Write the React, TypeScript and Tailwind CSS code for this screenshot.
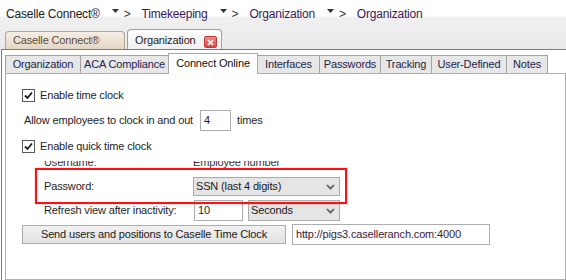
import React from "react"

type Tab = { label: string, w: string, active?: boolean }

const tabs: Tab[] = [
  { label: "Organization", w: "w-[76px]" },
  { label: "ACA Compliance", w: "w-[89px]" },
  { label: "Connect Online", w: "w-[90px]", active: true },
  { label: "Interfaces", w: "w-[63px]" },
  { label: "Passwords", w: "w-[62px]" },
  { label: "Tracking", w: "w-[52px]" },
  { label: "User-Defined", w: "w-[76px]" },
  { label: "Notes", w: "w-[42px]" },
]

function Caret() {
  return (
    <svg width="7" height="4" viewBox="0 0 7 4" className="ml-[12px] mt-[2px]">
      <path d="M0 0 H7 L3.5 4 Z" fill="#333" />
    </svg>
  )
}

function Crumb({ text, link, last }: { text: string, link?: boolean, last?: boolean }) {
  return (
    <>
      <span className={link ? "text-[#37185a]" : "text-[#1a1a1a]"}>{text}</span>
      {!last && <>
        <Caret />
        <span className="ml-[5px] mr-[11px] text-[#333]">&gt;</span>
      </>}
    </>
  )
}

function Checkbox() {
  return (
    <div className="w-[13px] h-[13px] border border-[#5a5a5a] bg-white flex items-center justify-center">
      <svg width="9" height="9" viewBox="0 0 9 9">
        <path d="M1 4.5 L3.5 7 L8 1.5" stroke="#1a1a1a" strokeWidth="1.8" fill="none" />
      </svg>
    </div>
  )
}

function Chevron() {
  return (
    <svg width="9" height="6" viewBox="0 0 9 6" className="ml-auto mr-[4px]">
      <path d="M1 1 L4.5 4.5 L8 1" stroke="#555" strokeWidth="1.6" fill="none" />
    </svg>
  )
}

function Select({ value, className }: { value: string, className: string }) {
  return (
    <div className={`${className} border border-[#acacac] bg-[#e5e5e5] flex items-center pl-[2px] text-[#1a1a1a]`}>
      <span>{value}</span>
      <Chevron />
    </div>
  )
}

export default function App() {
  return (
    <div className="w-[566px] h-[280px] bg-white overflow-hidden relative flex flex-col font-['Liberation_Sans',Arial,sans-serif] text-[11px] leading-[13px] tracking-[-0.15px]">
      {/* header: breadcrumb + document tabs */}
      <div className="h-[49px] bg-[linear-gradient(to_bottom,#ffffff_0,#ffffff_16px,#f0f0f0_17px,#e9e9e9_49px)] flex flex-col">
        <div className="h-[29px] pt-[7px] pl-[6px] flex items-start text-[12px] leading-[14px] tracking-[-0.2px]">
          <Crumb text="Caselle Connect®" />
          <Crumb text="Timekeeping" link />
          <Crumb text="Organization" link />
          <Crumb text="Organization" link last />
        </div>
        <div className="h-[20px] flex items-end pl-[5px] gap-[2px]">
          <div className="w-[120px] h-[18px] rounded-t-[4px] border border-b-0 border-[#b4a58f] bg-[linear-gradient(to_bottom,#f4eee5,#e3d7c4)] pl-[7px] pt-[2px] text-[#5c4c3e]">
            Caselle Connect®
          </div>
          <div className="w-[95px] h-[20px] rounded-t-[4px] border border-b-0 border-[#a29d97] bg-[linear-gradient(to_bottom,#fdfdfd,#f1f1f1)] pl-[7px] pt-[4px] flex items-start text-[#1a1a1a]">
            <span>Organization</span>
            <div className="ml-auto mr-[4px] mt-[2px] w-[13px] h-[12px] rounded-[2px] border border-[#c23a3a] bg-[linear-gradient(to_bottom,#f08a8a,#d84848)] flex items-center justify-center">
              <svg width="7" height="7" viewBox="0 0 7 7">
                <path d="M1 1 L6 6 M6 1 L1 6" stroke="white" strokeWidth="1.7" />
              </svg>
            </div>
          </div>
        </div>
      </div>

      {/* document frame */}
      <div className="flex-1 ml-px border-l border-t border-[#85796c] pl-[3px] pt-[3px] flex flex-col">
        <div className="h-[20px] flex items-end">
          {tabs.map((t, i) => (
            <div
              key={t.label}
              className={`${t.w} ${i > 0 ? "-ml-px" : ""} ${t.active
                ? "h-[21px] -mb-px bg-white border border-b-0 border-[#a8a8a8] relative z-10 pt-[3px] text-[#111]"
                : "h-[18px] bg-[#e7e7e7] border border-b-0 border-[#a3a3a3] pt-[2px] text-[#23234a]"} text-center`}
            >
              {t.label}
            </div>
          ))}
        </div>

        {/* tab panel */}
        <div className="flex-1 border border-[#b0b0b0] pl-[16px] flex flex-col text-[#1e1e1e]">
          <div className="mt-[15px] h-[13px] flex items-center">
            <Checkbox />
            <span className="ml-[5px]">Enable time clock</span>
          </div>

          <div className="mt-[8px] h-[21px] flex items-center pl-[2px]">
            <span className="w-[176px]">Allow employees to clock in and out</span>
            <div className="w-[31px] h-[21px] border border-[#abadb3] bg-white pl-[3px] pt-[3px]">4</div>
            <span className="ml-[6px]">times</span>
          </div>

          <div className="mt-[9px] h-[13px] flex items-center">
            <Checkbox />
            <span className="ml-[5px]">Enable quick time clock</span>
          </div>

          <div className="mt-[8px] h-[7px] overflow-hidden flex pl-[22px] text-[#333]">
            <div className="-mt-[5px] w-[149px]">Username:</div>
            <div className="-mt-[5px]">Employee number</div>
          </div>

          <div className="mt-[9px] h-[19px] flex items-center pl-[22px]">
            <span className="w-[149px]">Password:</span>
            <Select value="SSN (last 4 digits)" className="w-[147px] h-[19px]" />
          </div>

          <div className="mt-[4px] h-[21px] flex items-center pl-[22px]">
            <span className="w-[150px]">Refresh view after inactivity:</span>
            <div className="w-[49px] h-[21px] border border-[#abadb3] bg-white pl-[3px] pt-[3px]">10</div>
            <Select value="Seconds" className="ml-[5px] w-[92px] h-[21px]" />
          </div>

          <div className="mt-[3px] h-[21px] flex items-center">
            <div className="w-[264px] h-[19px] border border-[#acacac] bg-[linear-gradient(to_bottom,#f0f0f0,#e3e3e3)] flex items-center justify-center text-[#1a1a1a]">
              Send users and positions to Caselle Time Clock
            </div>
            <div className="ml-[6px] w-[198px] h-[21px] border border-[#abadb3] bg-white pl-[3px] pt-[3px] text-[#3a1a3a]">
              http://pigs3.caselleranch.com:4000
            </div>
          </div>
        </div>
      </div>

      {/* red highlight annotation */}
      <div className="absolute left-[35px] top-[168px] w-[312px] h-[36px] border-2 border-[#ff1010] shadow-[0_0_1px_#ff6060]" />
    </div>
  )
}
